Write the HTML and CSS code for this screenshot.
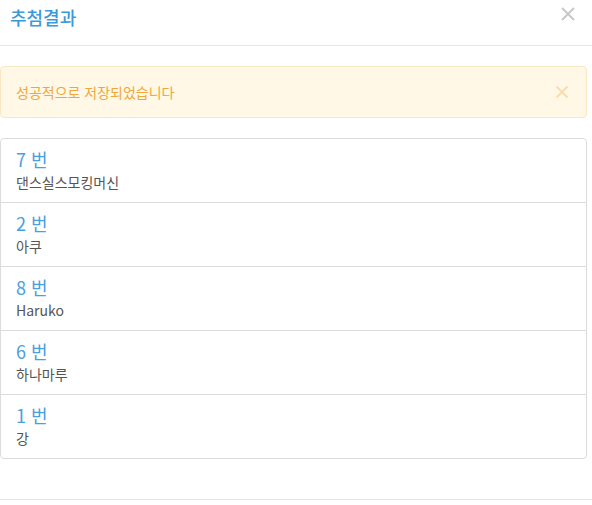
FILE: index.html
```html
<!DOCTYPE html>
<html lang="ko">
<head>
<meta charset="utf-8">
<link rel="stylesheet" href="styles.css">
</head>
<body>
<div class="modal">
  <div class="modal-header">
    <h4 class="modal-title">추첨결과</h4>
    <button class="close" aria-label="닫기">
      <svg width="16" height="16" viewBox="0 0 16 16"><path d="M2 2L14 14M14 2L2 14" stroke="currentColor" stroke-width="2"/></svg>
    </button>
  </div>
  <div class="modal-body">
    <div class="alert">
      <span>성공적으로 저장되었습니다</span>
      <button class="alert-close" aria-label="닫기">
        <svg width="14" height="14" viewBox="0 0 14 14"><path d="M1.5 1.5L12.5 12.5M12.5 1.5L1.5 12.5" stroke="currentColor" stroke-width="1.8"/></svg>
      </button>
    </div>
    <ul class="list">
      <li class="item"><div class="num">7 번</div><div class="name">댄스실스모킹머신</div></li>
      <li class="item"><div class="num">2 번</div><div class="name">아쿠</div></li>
      <li class="item"><div class="num">8 번</div><div class="name">Haruko</div></li>
      <li class="item"><div class="num">6 번</div><div class="name">하나마루</div></li>
      <li class="item"><div class="num">1 번</div><div class="name">강</div></li>
    </ul>
  </div>
  <div class="modal-footer"></div>
</div>
</body>
</html>
```
FILE: styles.css
```css
* { box-sizing: border-box; }
html, body { margin: 0; padding: 0; background: #fff; }
body {
  font-family: "Noto Sans CJK KR", "Noto Sans", sans-serif;
  color: #333;
  width: 592px;
}
.modal { display: flex; flex-direction: column; }
.modal-header {
  height: 46px;
  display: flex;
  align-items: flex-start;
  justify-content: space-between;
  padding: 4px 16px 0 10px;
  border-bottom: 1px solid #e5e5e5;
}
.modal-title {
  margin: 0;
  font-size: 18px;
  font-weight: 500;
  line-height: 26px;
  color: #3b9ad9;
}
.close {
  border: 0;
  background: none;
  padding: 0;
  margin-top: 2px;
  color: #c8c8c8;
  display: flex;
  cursor: pointer;
}
.modal-body {
  padding: 20px 5px 40px 0;
  display: flex;
  flex-direction: column;
  gap: 20px;
}
.alert {
  height: 52px;
  display: flex;
  align-items: center;
  justify-content: space-between;
  padding: 0 17px 0 15px;
  background: #fff8e6;
  border: 1px solid #fbe7c4;
  border-radius: 4px;
  color: #efa73a;
  font-size: 14px;
}
.alert-close {
  border: 0;
  background: none;
  padding: 0;
  color: #f8dcaf;
  display: flex;
}
.list {
  list-style: none;
  margin: 0;
  padding: 0;
  border: 1px solid #dcdcdc;
  border-radius: 4px;
}
.item {
  height: 64px;
  padding: 8px 15px 0;
  border-top: 1px solid #dcdcdc;
}
.item:first-child { border-top: 0; height: 63px; }
.num {
  font-size: 18px;
  line-height: 24px;
  color: #4aa0dc;
}
.name {
  font-size: 14px;
  line-height: 22px;
  color: #555;
}
.modal-footer {
  border-top: 1px solid #e5e5e5;
  height: 6px;
}
```
